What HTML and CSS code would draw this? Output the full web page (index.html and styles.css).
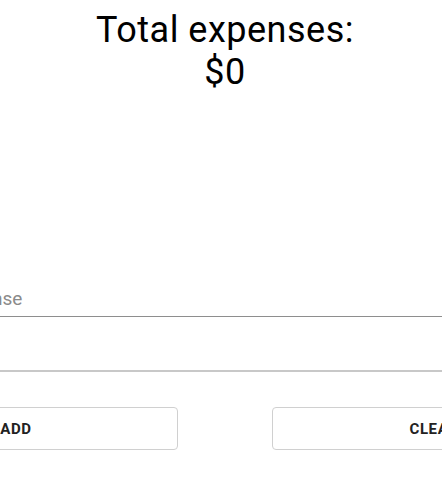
FILE: index.html
```html
<!DOCTYPE html>
<html lang="en">
<head>
<meta charset="utf-8">
<title>Expenses</title>
<link rel="stylesheet" href="styles.css">
</head>
<body>
<div class="page">
  <h1 class="total">Total expenses:<br>$0</h1>
  <form class="form">
    <div class="field field-first">
      <input class="input" type="text" placeholder="Expense">
    </div>
    <div class="field field-second">
      <input class="input" type="number">
    </div>
    <div class="actions">
      <button type="button" class="btn">ADD</button>
      <button type="button" class="btn">CLEAR</button>
    </div>
  </form>
</div>
</body>
</html>
```
FILE: styles.css
```css
html, body {
  margin: 0;
  padding: 0;
  overflow: hidden;
  background: #fff;
}
body {
  font-family: Roboto, "Liberation Sans", sans-serif;
  color: #000;
}
.page {
  width: 450px;
  display: flex;
  flex-direction: column;
  align-items: center;
}
.total {
  margin: 9px 0 0;
  font-size: 36px;
  line-height: 42px;
  font-weight: 400;
  letter-spacing: 0.5px;
  text-align: center;
  white-space: nowrap;
}
.form {
  display: flex;
  flex-direction: column;
  align-items: center;
  margin-top: 192px;
}
.field {
  width: 548px;
  flex-shrink: 0;
}
.input {
  display: block;
  width: 100%;
  box-sizing: border-box;
  border: 0;
  outline: 0;
  padding: 2px 0 7px;
  height: 32px;
  font: 19px Roboto, sans-serif;
  background: transparent;
}
.input::placeholder {
  color: #8a8a8a;
}
.field-first .input {
  border-bottom: 1px solid #8e8e8e;
}
.field-second {
  margin-top: 23px;
}
.field-second .input {
  border-bottom: 2px solid #c8c8c8;
}
.actions {
  display: flex;
  gap: 94px;
  margin-top: 35px;
  width: 742px;
  flex-shrink: 0;
}
.btn {
  flex: 1;
  height: 43px;
  background: #fff;
  border: 1px solid #d0d0d0;
  border-radius: 4px;
  font: 700 15px Roboto, sans-serif;
  color: #222;
  letter-spacing: 0.6px;
}
```
